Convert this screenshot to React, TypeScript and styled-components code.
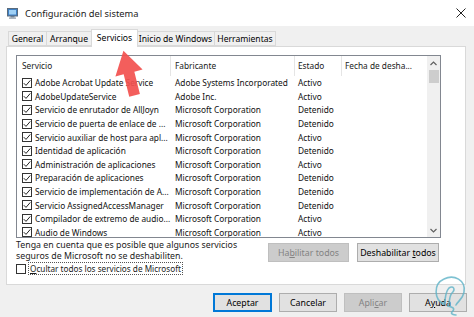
import React from 'react';
import styled, { createGlobalStyle } from 'styled-components';

const GlobalStyle = createGlobalStyle`
  html, body {
    margin: 0;
    padding: 0;
    background: #f0f0f0;
  }
  body {
    font-family: 'Noto Sans', 'Open Sans', sans-serif;
    font-size: 8.8px;
    color: #000;
  }
`;

const Dialog = styled.div`
  position: relative;
  width: 474px;
  height: 317px;
  background: #f0f0f0;
  overflow: hidden;
  display: flex;
  flex-direction: column;
`;

const TitleBar = styled.div`
  height: 26px;
  background: #fff;
  display: flex;
  align-items: center;
  padding: 0 0 0 7px;
  box-sizing: border-box;

  .title {
    margin-left: 7px;
    font-size: 9.3px;
    color: #1a1a1a;
  }

  .close {
    margin-left: auto;
    width: 26px;
    display: flex;
    justify-content: center;
  }
`;

const TabStrip = styled.div`
  display: flex;
  align-items: flex-end;
  height: 20px;
  padding: 0 0 0 8px;
  position: relative;
  z-index: 1;
`;

const Tab = styled.div<{ $active?: boolean; $w: number }>`
  width: ${(p) => p.$w}px;
  box-sizing: border-box;
  height: ${(p) => (p.$active ? 18 : 15)}px;
  margin: ${(p) => (p.$active ? '0 -1px -1px -1px' : '0')};
  padding-top: ${(p) => (p.$active ? 2 : 1)}px;
  border: 1px solid #d9d9d9;
  border-bottom: ${(p) => (p.$active ? 'none' : '1px solid #d9d9d9')};
  border-left: ${(p) => (p.$active ? '1px solid #d9d9d9' : 'none')};
  background: ${(p) => (p.$active ? '#fff' : '#f0f0f0')};
  text-align: center;
  white-space: nowrap;
  font-size: 8.6px;
  position: relative;
  z-index: ${(p) => (p.$active ? 2 : 0)};

  &:first-child {
    border-left: 1px solid #d9d9d9;
  }
`;

const Panel = styled.div`
  margin: 0 8px 0 6px;
  height: 239px;
  box-sizing: border-box;
  background: #fff;
  border: 1px solid #d9d9d9;
  padding: 8px 24px 0 9px;
  display: flex;
  flex-direction: column;
`;

const ListBox = styled.div`
  height: 183px;
  box-sizing: border-box;
  border: 1px solid #828790;
  display: flex;
  overflow: hidden;
  font-size: 8.3px;
`;

const ListContent = styled.div`
  flex: 1;
  display: flex;
  flex-direction: column;
  overflow: hidden;
`;

const gridCols = '154px 124px 47px 1fr';

const HeaderRow = styled.div`
  display: grid;
  grid-template-columns: ${gridCols};
  height: 20px;
  flex-shrink: 0;
  align-items: stretch;
`;

const HeaderCell = styled.div<{ $pad: number }>`
  display: flex;
  align-items: center;
  padding-left: ${(p) => p.$pad}px;
  padding-bottom: 2px;
  border-right: 1px solid #e5e5e5;
  white-space: nowrap;
  overflow: hidden;
  color: #1a1a1a;

  &:last-child {
    border-right: none;
  }
`;

const Row = styled.div`
  display: grid;
  grid-template-columns: ${gridCols};
  height: 13.6px;
  flex-shrink: 0;
  align-items: center;
  white-space: nowrap;
`;

const Cell = styled.div<{ $pad: number }>`
  padding-left: ${(p) => p.$pad}px;
  overflow: hidden;
  display: flex;
  align-items: center;
  gap: 3px;
  line-height: 13px;
  color: #111;
`;

const Box = styled.span`
  width: 10px;
  height: 10px;
  box-sizing: border-box;
  border: 1px solid #333;
  background: #fff;
  display: inline-flex;
  align-items: center;
  justify-content: center;
  flex-shrink: 0;
`;

const ScrollBar = styled.div`
  width: 13px;
  background: #f0f0f0;
  display: flex;
  flex-direction: column;
  align-items: center;
  flex-shrink: 0;

  .arrow {
    height: 14px;
    display: flex;
    align-items: center;
    justify-content: center;
    width: 100%;
  }

  .thumb {
    width: 10px;
    height: 13px;
    background: #cdcdcd;
  }

  .track {
    flex: 1;
  }
`;

const Footer = styled.div`
  display: flex;
  justify-content: space-between;
  margin-top: 2px;
`;

const Note = styled.div`
  display: flex;
  flex-direction: column;
  line-height: 11px;
  color: #1a1a1a;

  .hide {
    display: flex;
    align-items: center;
    gap: 3px;
    margin-top: 1px;
  }

  .focus {
    outline: 1px dotted #555;
    padding: 0 1px;
    line-height: 11px;
    font-size: 8.2px;
  }
`;

const SideButtons = styled.div`
  display: flex;
  gap: 8px;
  padding-top: 3px;
  margin-right: 2px;
`;

const Button = styled.div<{ $w: number; $disabled?: boolean; $default?: boolean }>`
  width: ${(p) => p.$w}px;
  height: 19px;
  box-sizing: border-box;
  display: flex;
  align-items: center;
  justify-content: center;
  background: ${(p) => (p.$disabled ? '#cccccc' : '#e1e1e1')};
  border: ${(p) => (p.$default ? '2px solid #0078d7' : p.$disabled ? '1px solid #bfbfbf' : '1px solid #adadad')};
  color: ${(p) => (p.$disabled ? '#838383' : '#000')};
  white-space: pre;
`;

const BottomBar = styled.div`
  display: flex;
  justify-content: flex-end;
  gap: 7px;
  padding: 8px 7px 0 0;
`;

const Arrow = styled.svg`
  position: absolute;
  left: 112px;
  top: 49px;
`;

const Watermark = styled.svg`
  position: absolute;
  left: 430px;
  top: 274px;
`;

const rows: [string, string, string][] = [
  ['Adobe Acrobat Update Service', 'Adobe Systems Incorporated', 'Activo'],
  ['AdobeUpdateService', 'Adobe Inc.', 'Activo'],
  ['Servicio de enrutador de AllJoyn', 'Microsoft Corporation', 'Detenido'],
  ['Servicio de puerta de enlace de ...', 'Microsoft Corporation', 'Detenido'],
  ['Servicio auxiliar de host para apl...', 'Microsoft Corporation', 'Activo'],
  ['Identidad de aplicación', 'Microsoft Corporation', 'Detenido'],
  ['Administración de aplicaciones', 'Microsoft Corporation', 'Activo'],
  ['Preparación de aplicaciones', 'Microsoft Corporation', 'Detenido'],
  ['Servicio de implementación de A...', 'Microsoft Corporation', 'Detenido'],
  ['Servicio AssignedAccessManager', 'Microsoft Corporation', 'Detenido'],
  ['Compilador de extremo de audio...', 'Microsoft Corporation', 'Activo'],
  ['Audio de Windows', 'Microsoft Corporation', 'Activo'],
];

const tabs = [
  { label: 'General', w: 39 },
  { label: 'Arranque', w: 45 },
  { label: 'Servicios', w: 47, active: true },
  { label: 'Inicio de Windows', w: 78 },
  { label: 'Herramientas', w: 61 },
];

const Check = ({ checked }: { checked?: boolean }) => (
  <Box>
    {checked && (
      <svg width='8' height='8' viewBox='0 0 8 8'>
        <path d='M0.8 4.2 L3 6.4 L7.3 1.4' fill='none' stroke='#222' strokeWidth='1' />
      </svg>
    )}
  </Box>
);

const App = () => {
  return (
    <>
      <GlobalStyle />
      <Dialog>
        <TitleBar>
          <svg width='11' height='11' viewBox='0 0 11 11'>
            <rect x='0.5' y='0.5' width='10' height='7.5' fill='#3d7fc4' stroke='#5a6b7c' />
            <rect x='2' y='2' width='7' height='4.5' fill='#9fd0f5' />
            <rect x='3.5' y='8' width='4' height='1.5' fill='#6f7f8f' />
            <rect x='2' y='9.5' width='7' height='1.2' fill='#8a96a3' />
          </svg>
          <span className='title'>Configuración del sistema</span>
          <div className='close'>
            <svg width='10' height='10' viewBox='0 0 10 10'>
              <path d='M0.5 0.5 L9.5 9.5 M9.5 0.5 L0.5 9.5' stroke='#222' strokeWidth='1' />
            </svg>
          </div>
        </TitleBar>
        <TabStrip>
          {tabs.map((t) => (
            <Tab key={t.label} $w={t.w} $active={t.active}>
              {t.label}
            </Tab>
          ))}
        </TabStrip>
        <Panel>
          <ListBox>
            <ListContent>
              <HeaderRow>
                <HeaderCell $pad={5}>Servicio</HeaderCell>
                <HeaderCell $pad={4}>Fabricante</HeaderCell>
                <HeaderCell $pad={3}>Estado</HeaderCell>
                <HeaderCell $pad={3}>Fecha de desha...</HeaderCell>
              </HeaderRow>
              {rows.map((r) => (
                <Row key={r[0]}>
                  <Cell $pad={5}>
                    <Check checked />
                    <span>{r[0]}</span>
                  </Cell>
                  <Cell $pad={4}>{r[1]}</Cell>
                  <Cell $pad={3}>{r[2]}</Cell>
                  <Cell $pad={3} />
                </Row>
              ))}
            </ListContent>
            <ScrollBar>
              <div className='arrow'>
                <svg width='7' height='5' viewBox='0 0 7 5'>
                  <path d='M0.5 4 L3.5 1 L6.5 4' fill='none' stroke='#606060' strokeWidth='1.2' />
                </svg>
              </div>
              <div className='thumb' />
              <div className='track' />
              <div className='arrow'>
                <svg width='7' height='5' viewBox='0 0 7 5'>
                  <path d='M0.5 1 L3.5 4 L6.5 1' fill='none' stroke='#606060' strokeWidth='1.2' />
                </svg>
              </div>
            </ScrollBar>
          </ListBox>
          <Footer>
            <Note>
              <span>Tenga en cuenta que es posible que algunos servicios</span>
              <span>seguros de Microsoft no se deshabiliten.</span>
              <div className='hide'>
                <Check />
                <span className='focus'>
                  <u>O</u>cultar todos los servicios de Microsoft
                </span>
              </div>
            </Note>
            <SideButtons>
              <Button $w={81} $disabled>
                <span>
                  Ha<u>b</u>ilitar todos
                </span>
              </Button>
              <Button $w={82}>
                <span>
                  Deshabilitar <u>t</u>odos
                </span>
              </Button>
            </SideButtons>
          </Footer>
        </Panel>
        <BottomBar>
          <Button $w={59} $default>
            Aceptar
          </Button>
          <Button $w={58}>Cancelar</Button>
          <Button $w={58} $disabled>
            <span>
              Apli<u>c</u>ar
            </span>
          </Button>
          <Button $w={58}>
            <span>
              A<u>y</u>uda
            </span>
          </Button>
        </BottomBar>
        <Arrow width='34' height='48' viewBox='0 0 34 48'>
          <g transform='rotate(-14 17 24)'>
            <polygon points='17,1 31,24 22.5,24 22.5,47 11.5,47 11.5,24 3,24' fill='#f2504e' opacity='0.92' />
          </g>
        </Arrow>
        <Watermark width='44' height='43' viewBox='0 0 44 43'>
          <g fill='none' stroke='#5fb3c8' strokeWidth='1.6' opacity='0.8' strokeLinecap='round'>
            <path d='M14 30 C4 26 3 10 14 5 C24 0 36 6 34 18 C33 25 28 27 26 31' />
            <path d='M14 30 C16 24 15 18 19 14 C23 11 26 15 22 19 C19 22 20 28 18 32 C22 33 26 34 22 38 C20 40 24 41 26 41' />
          </g>
        </Watermark>
      </Dialog>
    </>
  );
};

export default App;
